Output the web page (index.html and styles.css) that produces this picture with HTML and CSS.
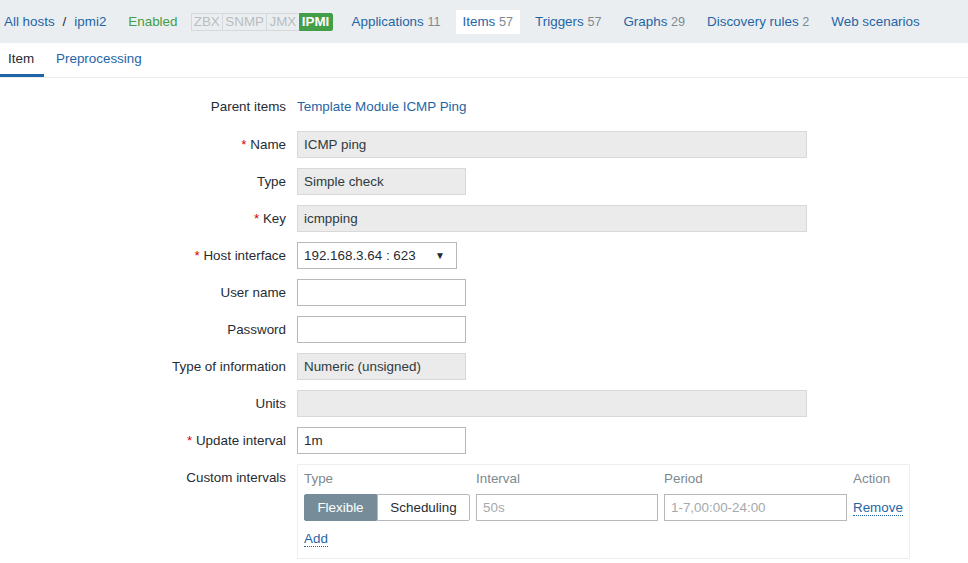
FILE: index.html
```html
<!DOCTYPE html>
<html>
<head>
<meta charset="utf-8">
<link rel="stylesheet" href="styles.css">
</head>
<body>
<div class="topnav">
  <a class="link" href="#">All hosts</a>
  <span class="sep">/</span>
  <a class="link" href="#">ipmi2</a>
  <span class="enabled">Enabled</span>
  <div class="badges">
    <span class="badge">ZBX</span><span class="badge">SNMP</span><span class="badge">JMX</span><span class="badge on">IPMI</span>
  </div>
  <nav class="navitems">
    <a class="navitem" href="#">Applications <span class="cnt">11</span></a>
    <a class="navitem active" href="#">Items <span class="cnt">57</span></a>
    <a class="navitem" href="#">Triggers <span class="cnt">57</span></a>
    <a class="navitem" href="#">Graphs <span class="cnt">29</span></a>
    <a class="navitem" href="#">Discovery rules <span class="cnt">2</span></a>
    <a class="navitem" href="#">Web scenarios</a>
  </nav>
</div>
<div class="tabs">
  <span class="tab current">Item</span>
  <a class="tab" href="#">Preprocessing</a>
</div>
<form class="form">
  <div class="row parent">
    <label class="lbl">Parent items</label>
    <a class="link" href="#">Template Module ICMP Ping</a>
  </div>
  <div class="row">
    <label class="lbl"><span class="req">*</span> Name</label>
    <div class="field ro wide">ICMP ping</div>
  </div>
  <div class="row">
    <label class="lbl">Type</label>
    <div class="field ro narrow">Simple check</div>
  </div>
  <div class="row">
    <label class="lbl"><span class="req">*</span> Key</label>
    <div class="field ro wide">icmpping</div>
  </div>
  <div class="row">
    <label class="lbl"><span class="req">*</span> Host interface</label>
    <div class="field select"><span>192.168.3.64 : 623</span><span class="arrow">&#9660;</span></div>
  </div>
  <div class="row">
    <label class="lbl">User name</label>
    <div class="field narrow"></div>
  </div>
  <div class="row">
    <label class="lbl">Password</label>
    <div class="field narrow"></div>
  </div>
  <div class="row">
    <label class="lbl">Type of information</label>
    <div class="field ro narrow">Numeric (unsigned)</div>
  </div>
  <div class="row">
    <label class="lbl">Units</label>
    <div class="field ro wide"></div>
  </div>
  <div class="row">
    <label class="lbl"><span class="req">*</span> Update interval</label>
    <div class="field narrow">1m</div>
  </div>
  <div class="row top">
    <label class="lbl">Custom intervals</label>
    <div class="intervals">
      <div class="grid">
        <div class="th">Type</div>
        <div class="th">Interval</div>
        <div class="th">Period</div>
        <div class="th">Action</div>
        <div class="seg"><span class="segbtn sel">Flexible</span><span class="segbtn">Scheduling</span></div>
        <div class="field dim">50s</div>
        <div class="field dim">1-7,00:00-24:00</div>
        <div class="act"><a class="dotlink" href="#">Remove</a></div>
      </div>
      <div class="addrow"><a class="dotlink" href="#">Add</a></div>
    </div>
  </div>
</form>
</body>
</html>
```
FILE: styles.css
```css
* { box-sizing: border-box; }
body {
  margin: 0;
  font-family: "Liberation Sans", Arial, sans-serif;
  font-size: 13.4px;
  color: #1f2c33;
  background: #fff;
}
a { text-decoration: none; }
.link { color: #1f65a6; }

.topnav {
  display: flex;
  align-items: center;
  height: 43px;
  background: #ebeef0;
  padding-left: 4px;
}
.sep { margin: 0 8px 0 8px; color: #1f2c33; }
.enabled { color: #429e47; margin-left: 22px; }
.badges { display: flex; margin-left: 14px; }
.badge {
  height: 18px;
  line-height: 16px;
  padding: 0 2.25px;
  border: 1px solid #d6d9db;
  color: #b9bdbf;
  margin-left: -1px;
}
.badge.on {
  background: #429e47;
  border-color: #429e47;
  color: #fff;
  font-weight: bold;
  border-radius: 0 2px 2px 0;
}
.navitems { display: flex; margin-left: 12.5px; }
.navitem {
  color: #1f65a6;
  height: 24px;
  line-height: 24px;
  padding: 0 6.5px;
  margin-right: 9px;
}
.navitem.active { background: #fff; color: #1f65a6; }
.cnt { font-size: 12.6px; color: #7e8a90; }

.tabs {
  display: flex;
  height: 35px;
  border-bottom: 1px solid #ebeef0;
}
.tab {
  line-height: 31px;
  padding: 0 10px 0 12px;
  color: #1f65a6;
  border-bottom: 3px solid transparent;
}
.tab.current {
  padding-left: 8px;
  color: #1f2c33;
  border-bottom-color: #1f65a6;
}

.form { padding-top: 15px; }
.row {
  display: flex;
  align-items: center;
  min-height: 27px;
  margin-bottom: 10px;
}
.row.parent { margin-bottom: 11px; }
.row.top { align-items: flex-start; }
.lbl {
  width: 297px;
  padding-right: 11px;
  text-align: right;
  line-height: 27px;
}
.req { color: #d40000; }

.field {
  height: 27px;
  line-height: 25px;
  border: 1px solid #b4b9bc;
  padding: 0 6px;
  background: #fff;
  white-space: nowrap;
  overflow: hidden;
}
.field.ro { background: #ebebeb; border-color: #d8d8d8; color: #2e3a40; }
.wide { width: 510px; }
.narrow { width: 169px; }
.select {
  width: 160px;
  display: flex;
  justify-content: space-between;
  padding-right: 11px;
}
.arrow { font-size: 10px; }

.intervals {
  width: 613px;
  border: 1px solid #eceeef;
  padding: 5px 6px 10px 6px;
}
.grid {
  display: grid;
  grid-template-columns: 166px 182px 183px auto;
  column-gap: 6px;
  row-gap: 6px;
  align-items: center;
}
.th { color: #7e8a90; line-height: 18px; }
.seg { display: flex; height: 27px; }
.segbtn {
  line-height: 25px;
  border: 1px solid #b4b9bc;
  background: #fff;
  padding: 0 12px;
  border-radius: 0 2px 2px 0;
  flex: 1;
  text-align: center;
}
.segbtn.sel {
  flex: 0 0 73px;
  background: #768d99;
  border-color: #768d99;
  color: #fff;
  border-radius: 2px 0 0 2px;
}
.field.dim { color: #a4a9ac; }
.dotlink {
  color: #1f65a6;
  border-bottom: 1px dotted #1f65a6;
}
.addrow { margin-top: 9px; line-height: 18px; }
```
